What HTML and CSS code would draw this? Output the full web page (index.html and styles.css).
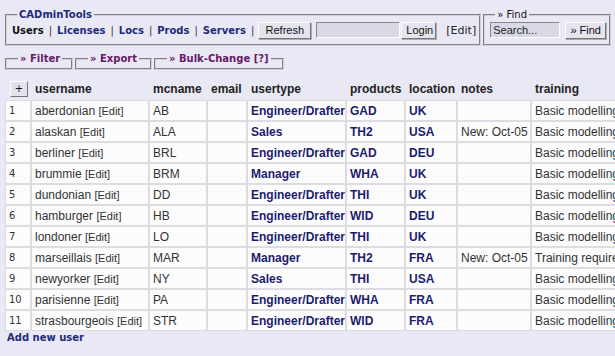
FILE: index.html
```html
<!DOCTYPE html>
<html lang="en">
<head>
    <meta charset="UTF-8">
    <title>CADminTools - Users</title>
    <link rel="stylesheet" href="styles.css">
</head>
<body>

    <!-- Top bar: navigation + login, and search -->
    <div class="topbar">
        <fieldset class="box tools">
            <legend>CADminTools</legend>
            <div class="box-row">
                <nav class="menu">
                    <span class="current">Users</span> <span class="sep">|</span>
                    <a href="#">Licenses</a> <span class="sep">|</span>
                    <a href="#">Locs</a> <span class="sep">|</span>
                    <a href="#">Prods</a> <span class="sep">|</span>
                    <a href="#">Servers</a> <span class="sep">|</span>
                </nav>
                <button class="btn btn-refresh">Refresh</button>
                <input class="field login-field" type="text">
                <button class="btn btn-login">Login</button>
                <span class="top-edit">[Edit]</span>
            </div>
        </fieldset>

        <fieldset class="box find">
            <legend>&raquo; Find</legend>
            <div class="box-row">
                <input class="field search-field" type="text" value="Search...">
                <button class="btn btn-find">&raquo; Find</button>
            </div>
        </fieldset>
    </div>

    <!-- Collapsed panels -->
    <div class="panels">
        <fieldset class="panel panel-filter"><legend>&raquo; Filter</legend></fieldset>
        <fieldset class="panel panel-export"><legend>&raquo; Export</legend></fieldset>
        <fieldset class="panel panel-bulk"><legend>&raquo; Bulk-Change [?]</legend></fieldset>
    </div>

    <!-- Users table -->
    <table class="users">
        <thead>
            <tr>
                <th class="c-num"><button class="add-btn">+</button></th>
                <th class="c-user">username</th>
                <th class="c-mc">mcname</th>
                <th class="c-email">email</th>
                <th class="c-type">usertype</th>
                <th class="c-prod">products</th>
                <th class="c-loc">location</th>
                <th class="c-notes">notes</th>
                <th class="c-train">training</th>
            </tr>
        </thead>
        <tbody>
            <tr>
                <td class="num">1</td>
                <td>aberdonian <a class="edit" href="#">[Edit]</a></td>
                <td>AB</td><td></td>
                <td class="strong">Engineer/Drafter</td><td class="strong">GAD</td><td class="strong">UK</td>
                <td></td><td>Basic modelling course</td>
            </tr>
            <tr>
                <td class="num">2</td>
                <td>alaskan <a class="edit" href="#">[Edit]</a></td>
                <td>ALA</td><td></td>
                <td class="strong">Sales</td><td class="strong">TH2</td><td class="strong">USA</td>
                <td>New: Oct-05</td><td>Basic modelling course</td>
            </tr>
            <tr>
                <td class="num">3</td>
                <td>berliner <a class="edit" href="#">[Edit]</a></td>
                <td>BRL</td><td></td>
                <td class="strong">Engineer/Drafter</td><td class="strong">GAD</td><td class="strong">DEU</td>
                <td></td><td>Basic modelling course</td>
            </tr>
            <tr>
                <td class="num">4</td>
                <td>brummie <a class="edit" href="#">[Edit]</a></td>
                <td>BRM</td><td></td>
                <td class="strong">Manager</td><td class="strong">WHA</td><td class="strong">UK</td>
                <td></td><td>Basic modelling course</td>
            </tr>
            <tr>
                <td class="num">5</td>
                <td>dundonian <a class="edit" href="#">[Edit]</a></td>
                <td>DD</td><td></td>
                <td class="strong">Engineer/Drafter</td><td class="strong">THI</td><td class="strong">UK</td>
                <td></td><td>Basic modelling course</td>
            </tr>
            <tr>
                <td class="num">6</td>
                <td>hamburger <a class="edit" href="#">[Edit]</a></td>
                <td>HB</td><td></td>
                <td class="strong">Engineer/Drafter</td><td class="strong">WID</td><td class="strong">DEU</td>
                <td></td><td>Basic modelling course</td>
            </tr>
            <tr>
                <td class="num">7</td>
                <td>londoner <a class="edit" href="#">[Edit]</a></td>
                <td>LO</td><td></td>
                <td class="strong">Engineer/Drafter</td><td class="strong">THI</td><td class="strong">UK</td>
                <td></td><td>Basic modelling course</td>
            </tr>
            <tr>
                <td class="num">8</td>
                <td>marseillais <a class="edit" href="#">[Edit]</a></td>
                <td>MAR</td><td></td>
                <td class="strong">Manager</td><td class="strong">TH2</td><td class="strong">FRA</td>
                <td>New: Oct-05</td><td>Training required</td>
            </tr>
            <tr>
                <td class="num">9</td>
                <td>newyorker <a class="edit" href="#">[Edit]</a></td>
                <td>NY</td><td></td>
                <td class="strong">Sales</td><td class="strong">THI</td><td class="strong">USA</td>
                <td></td><td>Basic modelling course</td>
            </tr>
            <tr>
                <td class="num">10</td>
                <td>parisienne <a class="edit" href="#">[Edit]</a></td>
                <td>PA</td><td></td>
                <td class="strong">Engineer/Drafter</td><td class="strong">WHA</td><td class="strong">FRA</td>
                <td></td><td>Basic modelling course</td>
            </tr>
            <tr>
                <td class="num">11</td>
                <td>strasbourgeois <a class="edit" href="#">[Edit]</a></td>
                <td>STR</td><td></td>
                <td class="strong">Engineer/Drafter</td><td class="strong">WID</td><td class="strong">FRA</td>
                <td></td><td>Basic modelling course</td>
            </tr>
        </tbody>
    </table>

    <a class="add-user" href="#">Add new user</a>

</body>
</html>
```

FILE: styles.css
```css
html, body {
    overflow: hidden;
}

body {
    margin: 0;
    padding: 5px;
    background-color: #e9e9f5;
    font-family: "DejaVu Sans", Verdana, sans-serif;
    font-size: 10px;
    color: #222;
}

a {
    text-decoration: none;
}

/* Top bar */
.topbar {
    display: flex;
    gap: 2px;
    margin-top: 4px;
}

.box {
    box-sizing: border-box;
    margin: 0;
    padding: 0 3px 5px 5px;
    border: 2px groove #d0d0da;
}

.box legend {
    margin-left: 5px;
    padding: 0 2px;
    line-height: 12px;
}

.tools {
    width: 476px;
}

.tools legend {
    font-weight: bold;
    color: #1d2a7a;
}

.find {
    width: 128px;
}

.find legend {
    color: #111;
}

.box-row {
    display: flex;
    align-items: center;
    height: 18px;
}

.menu {
    font-weight: bold;
    color: #1d2a7a;
    white-space: nowrap;
    word-spacing: 1.5px;
}

.menu a {
    color: #1d2a7a;
}

.menu .current {
    color: #111;
}

.menu .sep {
    font-weight: normal;
    color: #333;
}

/* Classic buttons and inputs */
.btn {
    box-sizing: border-box;
    height: 17px;
    padding: 0 4px;
    font-family: "Liberation Sans", Arial, sans-serif;
    font-size: 11px;
    color: #111;
    background-color: #e4e4ee;
    border: 1px solid;
    border-color: #fff #777 #777 #fff;
    box-shadow: 1px 1px 0 #aaa;
}

.btn-refresh {
    width: 53px;
    margin-left: 4px;
}

.btn-login {
    width: 35px;
    margin-left: 1px;
}

.btn-find {
    width: 41px;
    margin-left: 5px;
}

.field {
    box-sizing: border-box;
    height: 16px;
    padding: 0 2px;
    font-family: "Liberation Sans", Arial, sans-serif;
    font-size: 11px;
    color: #222;
    background-color: #d9d9e5;
    border: 1px solid;
    border-color: #888 #fff #fff #888;
}

.login-field {
    width: 84px;
    margin-left: 5px;
}

.search-field {
    width: 70px;
}

.top-edit {
    margin-left: 10px;
    font-size: 11px;
    color: #222;
}

/* Collapsed panels */
.panels {
    display: flex;
    gap: 2px;
    margin-top: 7px;
}

.panel {
    box-sizing: border-box;
    margin: 0;
    padding: 0 0 3px 11px;
    border: 2px groove #d0d0da;
}

.panel legend {
    padding: 0 2px;
    line-height: 12px;
    font-weight: bold;
    color: #661a66;
    white-space: nowrap;
}

.panel-filter {
    width: 68px;
}

.panel-export {
    width: 77px;
}

.panel-bulk {
    width: 130px;
}

/* Users table */
.users {
    table-layout: fixed;
    width: 646px;
    margin-top: 7px;
    border-collapse: separate;
    border-spacing: 0;
    font-family: "Liberation Sans", Arial, sans-serif;
    font-size: 12px;
}

.users th,
.users td {
    box-sizing: border-box;
    padding: 0 3px;
    border: 1px solid transparent;
    white-space: nowrap;
    overflow: hidden;
    text-align: left;
}

.users th {
    height: 23px;
    font-weight: bold;
    color: #222;
    vertical-align: middle;
}

.users td {
    height: 21px;
    color: #333;
    background-color: #fcfcfd;
    border-color: #dcdce2;
}

.c-num { width: 26px; }
.c-user { width: 118px; }
.c-mc { width: 58px; }
.c-email { width: 40px; }
.c-type { width: 99px; }
.c-prod { width: 59px; }
.c-loc { width: 52px; }
.c-notes { width: 74px; }
.c-train { width: 120px; }

.add-btn {
    box-sizing: border-box;
    width: 18px;
    height: 16px;
    margin-left: 1px;
    padding: 0;
    font-family: "DejaVu Sans", sans-serif;
    font-size: 10px;
    color: #111;
    background-color: #e2e2ea;
    border: 1px solid;
    border-color: #fff #777 #777 #fff;
}

.users td.num {
    font-family: "DejaVu Sans", sans-serif;
    font-size: 10px;
}

.users td.strong {
    font-weight: bold;
    color: #1c1c6e;
}

.edit {
    font-size: 11px;
    color: #333;
}

.add-user {
    display: block;
    margin-top: 1px;
    margin-left: 2px;
    font-weight: bold;
    color: #1d2a7a;
}
```
